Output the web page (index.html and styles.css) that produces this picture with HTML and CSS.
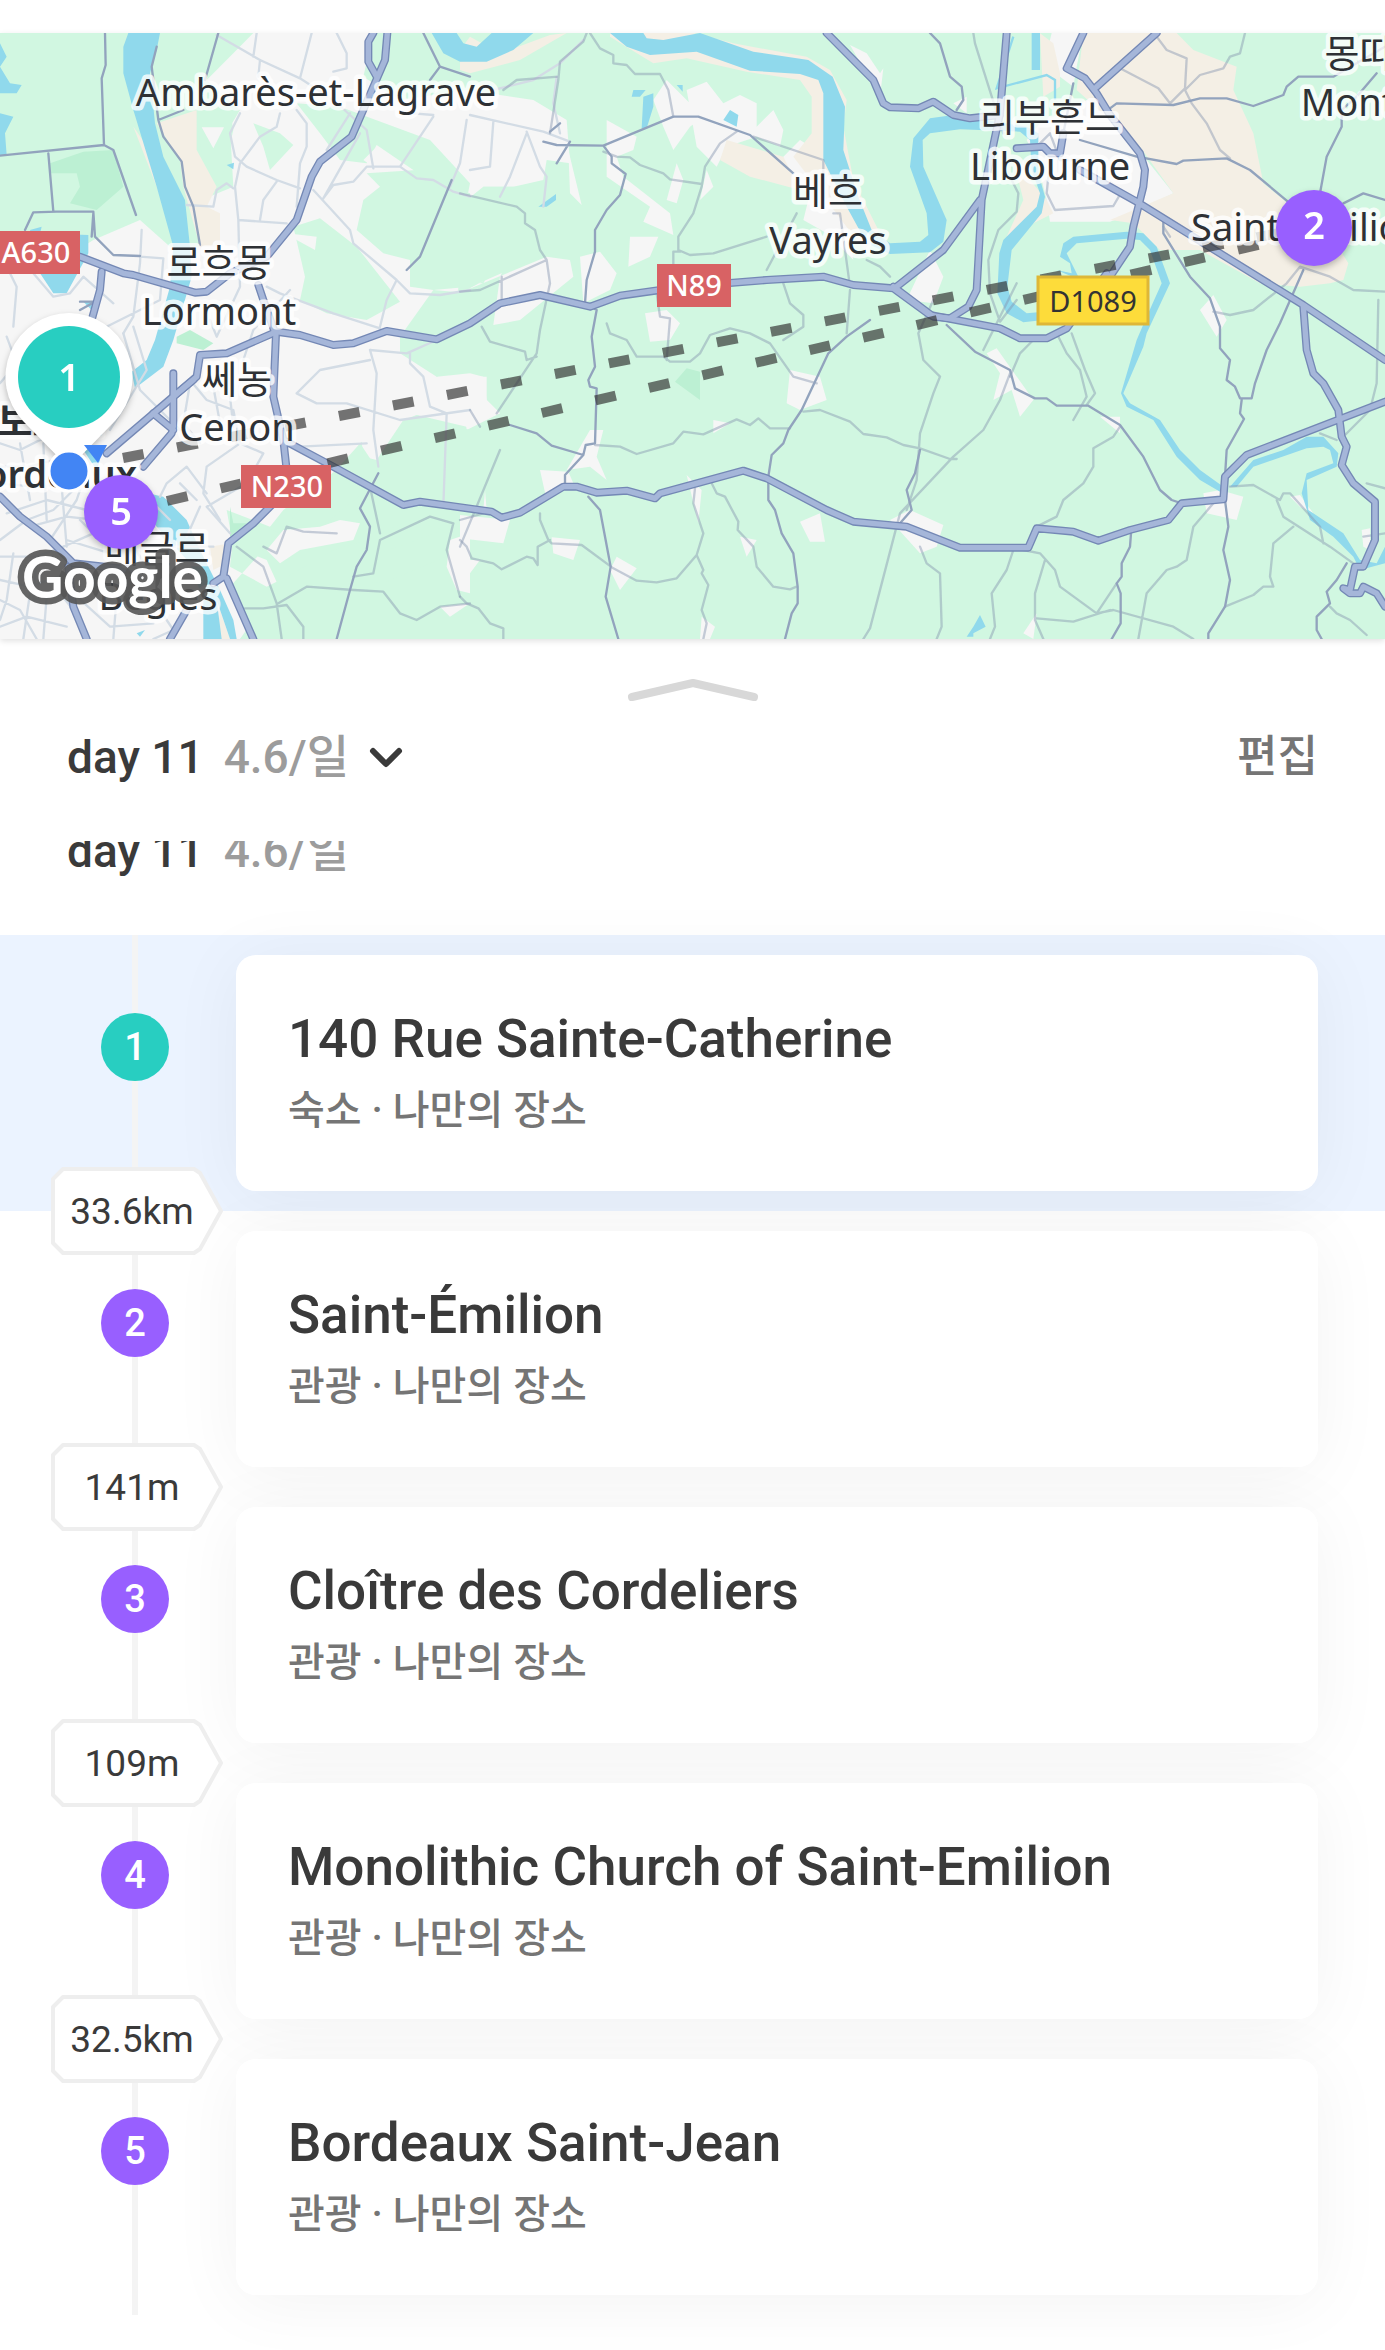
FILE: index.html
```html
<!DOCTYPE html>
<html lang="ko">
<head>
    <meta charset="UTF-8">
    <meta name="viewport" content="width=device-width, initial-scale=1.0">
    <title>day 11</title>
    <link rel="stylesheet" href="styles.css">
</head>
<body>
    <section class="map" aria-label="지도">
        <svg class="map-canvas" viewBox="0 33 1385 606">
            <!-- Terrain, drawn at three units to a pixel -->
            <svg x="0" y="33" width="1385" height="606" viewBox="0 99 4155 1818">
                <defs>
                    <g id="highways">
                        <path d="M1120 99L1105 125V185L1130 230M1162 99L1155 180L1055 410L960 485L935 530L890 660L800 770L690 820L620 875L585 878L400 825L370 820L240 770M305 815L300 870L275 960M775 855L790 900L822 990"/>
                        <path d="M0 1490L60 1550L140 1610L220 1690L400 1710M205 1700L220 1820L260 1917M510 1917L560 1830M320 1360L590 1130L600 1065L680 1060L830 995L900 1005L1000 1035L1060 1030L1160 993L1310 1018L1410 970L1500 910L1620 885L1770 920L1860 887L2050 860L2300 840L2470 830L2560 855L2680 865L2790 945L3000 985L3060 1015L3140 1015L3200 985L3320 820"/>
                        <path d="M828 1000L820 1190L850 1320L860 1410L820 1510L760 1570L685 1630L670 1730L640 1750M680 1735L760 1917M520 1120V1280L515 1300L430 1400M460 1240L520 1290M520 1190L580 1140M850 1320L1000 1400L1210 1515L1260 1505L1475 1535L1505 1553L1560 1538L1690 1460H1730L1790 1478L1880 1472L1965 1495L1980 1480L2230 1412L2300 1435L2480 1530L2560 1565L2720 1580L2880 1643H3085L3110 1585L3220 1595L3295 1622L3390 1590L3505 1560L3545 1510L3670 1498L3675 1430L3740 1365L4155 1205"/>
                        <path d="M2480 99L2620 240L2650 310L2670 322L2755 325L2800 305L2860 345L2910 355L3000 345M3020 99L3000 340L2945 600L2930 870L2905 920L2850 955L2800 950L2680 860M2940 600L2830 750L2690 860M3250 99L3200 205L3255 235L3290 280L3330 345L3420 460L3435 510L3430 560L3400 680L3390 740L3330 830M3290 260L3470 99M3050 445L3130 440L3150 460L3180 460L3190 400M3240 510L3410 605L3910 915L4155 1080M3910 920L3920 1050L3940 1120L3970 1150L4015 1230L4025 1310L4040 1340L4025 1395L4060 1450L4125 1505V1620L4090 1700H4065L4050 1770L4030 1765L4050 1780L4080 1780L4090 1760L4130 1780L4155 1820"/>
                    </g>
                </defs>

                <rect class="green" y="99" width="4155" height="1818"/>

                <!-- Built-up areas -->
                <g class="urban">
                    <path d="M0 820H120L280 720L420 660L510 740L600 740L580 610L700 560L690 380L720 330L620 240L700 160L760 99H1120L1090 230L1200 300L1400 270L1600 300L1700 360L1710 490L1640 480L1630 540L1540 560L1450 560L1430 640L1390 560L1370 960L1300 1020L1310 1130L1410 1120L1450 1130L1460 1200L1500 1240L1400 1280L1250 1245L1210 1270V1350L1120 1390L1080 1330L1050 1380L850 1530L810 1580L680 1530L700 1640L800 1680L850 1790L830 1830L760 1860L720 1917H0Z"/>
                    <path d="M1820 360L1910 410L1900 450L1850 470L1870 530L2010 640L2020 705L1930 665L1950 620L1820 530ZM1960 300L2000 240L2060 300L2110 350L2070 380L2020 450L1990 380ZM2060 270L2120 245L2170 310L2220 285L2270 310V380L2320 330L2350 390L2340 440L2270 410L2180 440L2150 500L2090 440ZM1890 710H1975L1950 770L1885 800ZM1500 830L1510 810L1400 870L1640 770L1710 780L1720 830L1560 960L1480 975ZM1740 770L1800 755L1850 820L1830 870L1750 910ZM1430 850L1510 710L1520 730L1450 850ZM1705 450L1745 615L1710 580ZM2000 600L2030 490L2050 540L2030 610ZM2120 510L2140 560L2100 600ZM2350 470L2400 420L2480 470L2500 600L2540 660L2560 780L2480 700L2410 660L2430 580L2340 530ZM2550 135L2600 160L2640 220L2650 205L2640 290Z"/>
                    <path d="M1935 940L2000 930L2040 970L2010 1020L1950 1025ZM1380 1130H1460V1200L1500 1240L1400 1290ZM2370 1110L2460 1130L2480 1200L2400 1230L2360 1210ZM1770 1290H1810L1790 1370L1820 1440L1770 1400L1700 1410ZM1620 1410L1705 1415L1720 1450L1640 1500ZM1380 1545L1530 1560L1510 1630L1380 1615ZM1450 1530L1455 1470L1460 1530ZM2400 1565L2460 1540L2475 1625H2430ZM1655 1612L1740 1620L1720 1680L1660 1660ZM1850 1670L1910 1705L1860 1770L1830 1710ZM2060 1425L2105 1470L2095 1570ZM2220 1610L2270 1620L2240 1670ZM2105 1850L2145 1880L2130 1917H2100ZM2670 1560L2730 1530L2830 1575L2810 1640L2760 1660ZM1390 1680H1440L1410 1720ZM2140 1260L2190 1270L2140 1300Z"/>
                    <path d="M3155 99H3250L3230 200L3220 260L3180 230L3145 140ZM3080 420L3120 370L3260 300L3290 310L3400 430L3520 580L3400 640L3330 665H3150L3140 600L3110 480ZM2790 750L2830 830L2800 910L2720 900ZM3600 930L3640 885L3680 960L3650 1010ZM2960 1060L2990 1045L3100 1200L3060 1250L3035 1170L2980 1200L3000 1120ZM3300 1250L3360 1250V1300ZM3610 1480L3660 1470L3730 1490L3710 1560L3620 1540ZM3870 1490L3900 1485L3940 1540L3900 1520ZM4085 1590L4110 1585V1650L4090 1640ZM3070 1900L3110 1840L3100 1917ZM2860 310L2900 290L2900 340Z"/>
                </g>
                <g class="green">
                    <path d="M890 310L1020 320L1290 420L1410 550L1400 600L1340 570L1240 510L1130 435L1100 490L1020 480L960 400ZM1100 520L1250 510L1350 560L1410 580V860L1300 870L1230 860V780L1150 760L1070 690L1090 600L1140 560ZM880 680L960 655L1070 740L1200 905L1100 960L980 940L900 900L915 830ZM760 370L840 400L880 435L810 510L790 440ZM590 340L690 330L700 390L660 560L610 500ZM1200 1010L1300 870L1410 880V1080L1310 1130L1200 1060ZM1400 600L1450 560L1600 560L1640 760L1390 870Z"/>
                    <path d="M1085 1325L1090 1370L1130 1380L1210 1260L1250 1245L1410 1290V1510L1210 1500L1090 1480L950 1590L840 1600L760 1560L700 1600L690 1700L800 1760L880 1720L1000 1650L1100 1620L1230 1560L1330 1590L1140 1660L1110 1770L1060 1800L1080 1917H720L780 1860L740 1820L730 1780L860 1830L920 1900L940 1820L1060 1740L1150 1750L1410 1640V1917H760L690 1760Z"/>
                </g>
                <path class="urban" d="M605 382H672L640 445ZM850 1590L960 1580L1020 1560L1080 1570L1060 1620L900 1650L840 1690L800 1650ZM1350 1620L1410 1600V1780L1370 1770L1340 1700ZM1320 1820L1410 1810L1350 1850ZM860 700L950 710L945 750L890 720ZM1090 480L1130 440L1185 490L1140 515Z"/>
                <path class="sand" d="M470 370L590 330V450L650 560L620 620L660 640V740H600L550 560L540 480ZM1380 150L1410 110L1500 160L1650 105L1700 99L1560 180L1410 220L1380 210ZM1830 110L1960 190L2060 175L2240 215L2400 240L2435 290V400L2380 470L2600 760L2635 690L2560 540L2530 380L2540 300L2490 210L2420 170L2200 130L2080 99H1830ZM2180 420L2350 470L2400 570L2250 530L2160 480ZM400 380L470 480L560 720L570 740L530 740L470 560ZM630 1640L690 1630L680 1690L640 1710ZM660 1830L690 1917H650Z"/>
                <path class="sand" d="M3250 99H3530L3580 150L3710 200L3700 270L3760 400L3790 550L3900 640L3990 700L4045 790L4030 840L3990 850L3900 860L3780 850L3600 750H3480L3400 670L3330 660L3520 580L3420 440L3230 270ZM3120 100L3160 130L3180 220L3180 260L3130 290ZM3040 480L3140 600L3160 640L3020 710L3070 600Z"/>
                <path class="park" d="M150 490L250 455L340 450L370 560L290 630L210 610L240 560L230 520L150 520ZM2025 1145L2060 1105L2100 1115L2100 1200ZM530 1010L570 990L640 1030L610 1050L530 1030ZM690 1520L700 1570L740 1570L690 1610Z"/>

                <!-- Rivers and lakes -->
                <g class="water">
                    <path d="M385 99H480L470 150L450 220L465 370L490 470L555 600L570 740L575 830L520 1020L490 1100L405 1165L395 1115L440 1080L465 1020L510 860L520 740L470 560L400 330L370 220V140ZM0 130L20 170L0 200L30 250L65 255L50 280H0ZM0 340L40 350L15 400L20 465H0ZM90 690L125 680L120 700L265 705V760L200 880H160L120 820ZM680 495L702 488L700 508ZM250 905H280L275 930Z"/>
                    <path d="M400 1470L490 1490L560 1560L600 1650L660 1770L700 1860L710 1917H690L650 1800L665 1917H610V1800L570 1690L470 1580ZM260 1330L300 1380L290 1410L250 1350ZM410 1900L435 1890L420 1910Z"/>
                    <path d="M1295 99L1330 160L1380 185H1460L1540 150L1600 99H1475L1430 140L1390 130L1370 99Z"/>
                    <path d="M1830 99L1880 140L1950 165L2090 155L2250 212L2400 222L2455 240L2470 280V480L2540 620L2600 730L2670 762L2790 757L2830 725L2840 660L2770 500L2768 420L2790 400L2880 388L3060 395L3090 420L3095 510L3120 580L3110 620L3010 720L2998 760L2992 880L3020 940L3070 967L3130 960V935L3080 940L3035 905L3022 860L3035 750L3125 640L3135 590L3115 520V400L3080 380L2860 345L2790 355L2740 415L2730 500L2780 640L2785 705L2760 725L2670 730L2615 690L2575 590L2530 450L2535 320L2498 230L2425 180L2260 155L2100 99L1990 120L1940 115L1930 99Z"/>
                    <path d="M1900 270H1937L1920 290L1895 290ZM1930 290L1960 280V320L1940 385H1925ZM2030 255H2048V275ZM2170 360L2190 330L2215 345L2210 380ZM1615 620L1668 582V600L1640 620ZM3095 99H3120V210H3095Z"/>
                    <path d="M3170 810L3215 820L3210 790L3180 770L3190 730L3220 710L3380 695L3430 700L3470 740L3510 850L3440 1000L3430 1040L3370 1180L3390 1210L3480 1260L3540 1350L3600 1410L3670 1460L3660 1475L3600 1440L3530 1370L3460 1260L3380 1220L3363 1180L3410 1020L3440 950L3485 850L3450 750L3420 720L3380 716L3230 730L3200 760L3225 810L3240 840ZM3690 1460L3760 1380L3850 1350L3920 1310L3970 1310L4015 1360L4010 1400L3920 1440L3925 1530L4030 1600L4080 1680L4130 1690L4155 1640V1690L4080 1710L4060 1670L4000 1610L3930 1560L3905 1480L3920 1420L4000 1390L3990 1350L3970 1340L3920 1345L3760 1400L3710 1460ZM2900 1910L2920 1880L2940 1845L2957 1880L2920 1900V1910Z"/>
                    <path class="stream" d="M3040 110L2990 265L3140 225L3165 240V300"/>
                </g>

                <!-- Streets -->
                <path class="street" d="M650 105L780 180L900 235L1000 300L1100 390L1120 505M770 99L760 170M780 180L775 230M935 99L900 235M1010 99L1040 160V205L1000 215M840 340L830 380L780 410L720 490L705 560L715 660L860 670M720 340L690 400L705 470L740 500L830 540L900 565M890 330L920 370V440L900 490L890 620M830 545L790 600L780 660M560 615L640 620L650 570L680 550L700 565M1300 350L1200 500H1100L1060 545L1000 555L970 595M1200 500L1250 535L1300 540L1360 575L1410 590M940 570L1050 690L1060 730L1190 840L1230 880L1320 885L1410 870M800 860L840 880L1000 940L1140 985M1400 360L1380 490L1350 560M1190 840L1160 900L1140 980M715 660L720 860L650 1010L630 960M420 770L490 775L480 900L300 990M425 690L420 790L400 950L370 1000M100 820L160 890L210 880L250 830L340 910M30 820L50 860L40 980M1050 340L980 450M1080 400L970 595M1410 345L1630 395L1710 425M1300 345L1240 340M1580 395L1620 500L1640 530L1630 620M1580 400L1530 530L1500 590M1480 365L1470 500L1410 510M1680 400L1660 310L1670 230M1480 270L1600 240L1680 190L1750 120"/>
                <path class="street" d="M1110 1050L1130 1120L1120 1290L1135 1400M1230 1060V1090L1270 1130L1290 1220L1340 1240L1330 1520M1110 1080L960 1110L890 1180M890 1180L950 1210L1040 1210L1200 1260L1410 1230M1110 1050L1220 1060L1310 1020M730 1080L760 990L870 870M570 1140L620 1200L700 1230L720 1330L790 1360L740 1450L620 1520L690 1600M620 1480L560 1400L500 1450L480 1490M720 1330L620 1400L610 1480L660 1560M570 1150L550 1270L600 1330M640 1160L660 1270M690 1190L700 1280M900 1340L1100 1330M20 1010L50 1090L0 1150M370 1000L420 1170L540 1290M400 980L440 1110L330 1290M0 1330L60 1350L140 1310L240 1360L300 1450M0 1400L90 1400L160 1380M60 1330L90 1500M130 1330L140 1560M180 1400L200 1640M0 1450L100 1460L230 1450M20 1540L140 1500L260 1530M0 1620L80 1560L160 1530L250 1440M90 1580L200 1550L290 1560M150 1620L230 1500L250 1440M0 1670H110L190 1640L280 1600M40 1660L20 1800L0 1860M110 1670L100 1800L180 1780L220 1830M0 1740L90 1760L200 1720M0 1800L60 1830L110 1917M90 1780L70 1917M200 1620L330 1660L440 1620M240 1560L320 1640M280 1510L310 1610M240 1700L350 1790L340 1917M220 1780L330 1880L460 1870M400 1640L440 1700L380 1800M440 1560L520 1640L640 1640M480 1830L520 1890L460 1917M600 1520L560 1610M430 1480L510 1560M0 1880L80 1850L200 1880M140 1790L130 1917M80 1300L30 1250L0 1230M350 1400L420 1560M540 1450L590 1500"/>

                <!-- Local roads -->
                <path class="local" d="M1500 1350L1380 1640M1760 99L1750 125L1680 185L1675 240L1650 400M1510 270L1550 240L1675 230M1770 99L1800 145L1840 165V190L1880 195L1905 222H1980L2005 270L2020 350M1810 455L1850 470L1890 472L1920 495L1990 520L2010 538L2105 552M2210 395L2160 430L2115 500L2105 560L2080 640L2035 710V750L2070 765L2140 760L2300 710M2260 410L2470 480V600M1380 580L1550 620L1575 640V670L1605 690L1620 750L1640 780L1650 850L1620 990L1610 1060L1490 1240M1380 875L1440 870L1640 780M1505 830V900M1440 1280L1410 1230M1445 980L1470 1025L1575 1055L1580 1080L1610 1070M1820 970L1830 1000L1880 1020L1910 1070H1990L2010 1085H2070L2100 1060L2130 1005L2190 985L2250 1000L2310 1030L2380 1130L2450 1150M1970 880L1980 950L2010 955L2000 1080M2020 820V755H2040M2350 850L2370 910L2410 945V980L2350 1020M2550 870L2540 1000M2300 810L2390 640M2500 640L2520 640L2550 860M2600 780L2640 800L2670 830"/>
                <path class="local" d="M1785 1335L1860 1340L1910 1362L2020 1330L2050 1295L2110 1303L2210 1258L2250 1275L2275 1255L2310 1285H2370M2410 1235L2460 1230L2550 1265L2590 1302L2660 1312L2710 1335L2760 1345L2850 1377H2870M1620 1540V1560L1645 1620L1655 1630L1745 1635L1840 1705L1910 1742L1970 1747L2030 1735L2090 1665L2110 1600L2080 1510L2085 1465M2090 1665L2110 1710L2105 1720L2125 1755L2105 1830L2120 1870L2110 1917M2135 1450L2150 1480L2175 1490L2215 1565L2213 1590L2260 1640L2270 1700L2320 1760L2370 1768L2390 1760M1380 1620L1400 1640L1415 1675L1480 1690L1505 1708L1580 1670L1600 1675L1613 1695V1640L1650 1620M1380 1560L1450 1540M1380 1790L1400 1810L1435 1825L1470 1870L1510 1885V1917M2700 1540L2860 1370L2950 1290L3000 1200L3030 1120M2700 1540L2610 1885L2590 1917M2720 1530L2750 1440L2760 1300L2800 1180L2820 1130L2770 1080L2755 1000L2800 900M2920 99L2925 130L3010 400M3035 540L3055 580L3050 635L2995 690L2965 780L2970 880L3000 965L3050 900M3050 850L2950 1050"/>
                <path class="local" d="M3150 480L3140 580L3165 630L3340 618L3365 575M3120 430L3150 400L3180 480H3270M3470 110L3500 150L3560 175L3555 265L3510 310L3475 265L3360 205M3735 99L3720 160L3690 170L3670 205L3600 225L3555 270L3575 310L3620 370L3660 450L3690 475M3490 680L3510 710M3640 935L3690 945L3760 930L3860 850L3900 800L3990 830L4060 870L4155 875M3170 1000L3200 1060L3240 1110L3260 1190L3220 1260M3215 1000L3255 1110L3285 1180L3260 1215M3100 1020L3060 1060L3030 1130M3360 1280L3340 1310L3280 1345V1400L3250 1450L3190 1500L3170 1550L3110 1580M3640 1510L3580 1580L3560 1680L3530 1700L3500 1710L3440 1780L3415 1917M3690 1460L3760 1455L3840 1500L3850 1480H3870L3960 1580L3970 1630M3830 1500L3850 1550L3990 1640L4060 1690M3880 1580L3820 1630L3810 1730L3820 1760H3790L3760 1785L3675 1820M3960 1300L4010 1320M4020 1320L4110 1230L4130 1150L4135 900M4100 1450L4155 1465M4090 1610L4155 1600M3040 1650L3020 1710L2975 1780L2985 1880L2970 1917M3070 1650L3120 1660L3165 1710L3180 1760L3290 1840L3340 1830L3520 1880L3580 1917M3135 1680L3105 1780V1860L3130 1917M3110 1855L3220 1865L3330 1830M3290 1840L3350 1750M2760 1640L2780 1690L2820 1720L2825 1880L2810 1917M3990 1820L4010 1840L4050 1860L4100 1905M710 1640L790 1700L830 1810L845 1917M835 1810L920 1760L1060 1770L1150 1775L1200 1840L1250 1860L1320 1820L1410 1810M735 1825H790L860 1815L910 1880V1917M1010 1600L910 1595L860 1580L830 1660L790 1640M1060 1730L1120 1720L1140 1620L1290 1550L1360 1570M1360 1570L1340 1650L1380 1790M1110 1460L1140 1600"/>

                <!-- Secondary roads -->
                <path class="secondary" d="M315 99L317 195L305 235L312 435L0 467M312 435L340 450L408 645M145 460L160 635L280 635L285 710L340 765L420 768M75 690L100 637L170 635M280 640L275 710M240 905H285L240 930M655 99L615 240M470 140L455 200L475 360L550 330M475 360L490 410L545 485L555 560L580 620L600 735M1270 99L1320 200L1290 240M1320 200L1410 230M1650 395L1680 370M1710 425L1670 490M1355 540L1260 770L1220 810M1630 425L1670 435L1810 437L2020 350H2095L2250 405L2380 520M1810 437L1835 470V490L1877 522L1860 585L1820 630L1785 690V755L1760 840L1755 910L1790 930L1775 1010L1785 1100L1765 1140L1770 1160L1790 1165L1785 1330L1757 1335L1750 1365L1695 1425V1455M1530 1275L1610 1300L1655 1337L1750 1365M1765 1490L1800 1530L1832 1700L1817 1790L1855 1917M2610 960L2540 1010L2485 1060L2405 1230L2365 1290L2350 1330L2315 1365L2305 1430V1500L2325 1530L2345 1600L2380 1660L2393 1760V1810L2375 1840L2355 1917M2760 1350L2745 1420L2720 1470L2735 1530L2700 1570"/>
                <path class="secondary" d="M2790 99L2820 130L2850 230L2885 260L2890 300L2870 330M2840 975L2925 1055L3030 1110L3045 1165L3105 1195H3140L3170 1217H3265L3360 1275L3430 1370L3480 1470L3515 1500L3545 1510M3330 325L3350 310L3520 315L3600 295H3680L3760 318L3850 285L3860 260L3895 230H4000L4155 140M4130 220L4070 290L4025 330V380L3980 470L3960 580M3240 420L3410 470L3530 492L3550 482L3680 475L3750 510L3870 610M4030 610L4090 580L4155 600M3490 660V700L3570 830L3630 895L3660 980V1045L3690 1080L3680 1140L3705 1160L3720 1195H3755L3765 1150L3800 1050L3840 970L3910 810M3725 1200L3720 1240L3732 1257L3680 1350L3675 1430M3675 1500L3685 1580L3670 1650L3690 1740L3675 1820L3625 1900V1917M3393 1600L3390 1640L3365 1690V1730L3350 1750L3362 1780V1870L3335 1917M4040 1690L4010 1740L3980 1775L3990 1810L3950 1850V1890L3965 1917M1135 1420L1080 1525L1110 1580L1100 1650L1070 1700L1050 1770L1010 1917M3220 250L3190 400"/>

                <use class="highway-casing" href="#highways"/>
                <use class="highway" href="#highways"/>
            </svg>

            <!-- Routes between stops -->
            <path class="route" d="M123 458L1300 229"/>
            <path class="route" d="M167 501L1300 235"/>

            <g class="place">
                <text x="316" y="106">Ambarès-et-Lagrave</text>
                <text x="219" y="276">로흐몽</text>
                <text x="219" y="325">Lormont</text>
                <text x="237" y="393">쎄농</text>
                <text x="237" y="441">Cenon</text>
                <text x="157" y="562">베글르</text>
                <text x="158" y="610">Bègles</text>
                <text x="828" y="205">베흐</text>
                <text x="828" y="254">Vayres</text>
                <text x="1050" y="131">리부흔느</text>
                <text x="1050" y="180">Libourne</text>
                <text x="1377" y="67">몽따뉴</text>
                <text x="1393" y="116">Montagne</text>
                <text x="1308" y="241">Saint-Émilion</text>
                <text class="place-city" x="50" y="435">보르도</text>
                <text class="place-city" x="48" y="488">Bordeaux</text>
            </g>

            <g class="shield">
                <rect x="-10" y="231" width="90" height="43"/>
                <text x="36" y="263">A630</text>
                <rect x="657" y="264" width="74" height="43"/>
                <text x="694" y="296">N89</text>
                <rect x="241" y="465" width="90" height="43"/>
                <text x="287" y="497">N230</text>
            </g>
            <g class="shield shield-local">
                <rect x="1038" y="277" width="110" height="47"/>
                <text x="1093" y="312">D1089</text>
            </g>

            <text class="map-logo" x="22" y="598">Google</text>

            <g class="pin">
                <circle class="visit" cx="1314" cy="228" r="38"/>
                <text x="1314" y="239">2</text>
            </g>
            <g class="pin">
                <path class="pin-drop" d="M69 313a64 64 0 0 1 46 108L69 468L23 421A64 64 0 0 1 69 313Z"/>
                <circle class="stay" cx="69" cy="377" r="51"/>
                <text x="69" y="391">1</text>
            </g>
            <path class="location" d="M84 445H107L98 463Z"/>
            <circle class="location location-dot" cx="69" cy="471" r="20"/>
            <g class="pin">
                <circle class="visit" cx="121" cy="512" r="37"/>
                <text x="121" y="525">5</text>
            </g>
        </svg>
    </section>

    <main class="sheet">
        <button class="handle" type="button" aria-label="펼치기">
            <svg width="132" height="26" viewBox="0 0 132 26"><path d="M5 19L66 5L127 19"/></svg>
        </button>

        <header class="day-bar">
            <button class="day" type="button">
                day 11 <span class="pace">4.6/일</span>
                <svg class="chevron" width="34" height="22" viewBox="0 0 34 22"><path d="M4 5L17 18L30 5"/></svg>
            </button>
            <button class="edit" type="button">편집</button>
        </header>

        <div class="schedule">
            <h2 class="day day-title">day 11 <span class="pace">4.6/일</span></h2>

            <ol class="stops">
                <li class="stop current">
                    <div class="rail">
                        <span class="number stay">1</span>
                        <span class="distance"><svg viewBox="0 0 172 88"><path d="M12 2H143L149 6L170 44L149 82L143 86H12L2 76V12Z"/></svg><b>33.6km</b></span>
                    </div>
                    <article class="card">
                        <div class="card-body">
                            <h3>140 Rue Sainte-Catherine</h3>
                            <p>숙소 · 나만의 장소</p>
                        </div>
                    </article>
                </li>
                <li class="stop">
                    <div class="rail">
                        <span class="number visit">2</span>
                        <span class="distance"><svg viewBox="0 0 172 88"><path d="M12 2H143L149 6L170 44L149 82L143 86H12L2 76V12Z"/></svg><b>141m</b></span>
                    </div>
                    <article class="card">
                        <div class="card-body">
                            <h3>Saint-Émilion</h3>
                            <p>관광 · 나만의 장소</p>
                        </div>
                    </article>
                </li>
                <li class="stop">
                    <div class="rail">
                        <span class="number visit">3</span>
                        <span class="distance"><svg viewBox="0 0 172 88"><path d="M12 2H143L149 6L170 44L149 82L143 86H12L2 76V12Z"/></svg><b>109m</b></span>
                    </div>
                    <article class="card">
                        <div class="card-body">
                            <h3>Cloître des Cordeliers</h3>
                            <p>관광 · 나만의 장소</p>
                        </div>
                    </article>
                </li>
                <li class="stop">
                    <div class="rail">
                        <span class="number visit">4</span>
                        <span class="distance"><svg viewBox="0 0 172 88"><path d="M12 2H143L149 6L170 44L149 82L143 86H12L2 76V12Z"/></svg><b>32.5km</b></span>
                    </div>
                    <article class="card">
                        <div class="card-body">
                            <h3>Monolithic Church of Saint-Emilion</h3>
                            <p>관광 · 나만의 장소</p>
                        </div>
                    </article>
                </li>
                <li class="stop">
                    <div class="rail">
                        <span class="number visit">5</span>
                    </div>
                    <article class="card">
                        <div class="card-body">
                            <h3>Bordeaux Saint-Jean</h3>
                            <p>관광 · 나만의 장소</p>
                        </div>
                    </article>
                </li>
            </ol>
        </div>
    </main>
</body>
</html>
```
FILE: styles.css
```css
* {
    box-sizing: border-box;
}

body {
    margin: 0;
    padding-top: 33px;
    background-color: #fff;
    color: #3a3a3a;
    font-family: Roboto, "Noto Sans CJK KR", sans-serif;
    font-weight: 500;
}

button {
    padding: 0;
    border: none;
    background: none;
    color: inherit;
    font: inherit;
    cursor: pointer;
}

h2, h3, p, ol {
    margin: 0;
    padding: 0;
    font-weight: 500;
}

/* Map */
.map {
    box-shadow: 0 2px 6px rgba(0, 0, 0, 0.12);
    font-family: "Noto Sans", "Noto Sans CJK KR", sans-serif;
}

.map-canvas {
    display: block;
    width: 100%;
}

.green { fill: #d1f7e1; }
.urban { fill: #f6f6f6; }
.sand { fill: #f4efe5; }
.park { fill: #bcf0d3; }
.water { fill: #90d9ec; }

.stream {
    fill: none;
    stroke: #90d9ec;
    stroke-width: 7;
}

.street, .local, .secondary, .highway, .highway-casing {
    fill: none;
    stroke-linejoin: round;
    stroke-linecap: round;
}

.street {
    stroke: #d3dce5;
    stroke-width: 7;
}

.local {
    stroke: #8494b0;
    stroke-opacity: 0.45;
    stroke-width: 7;
}

.secondary {
    stroke: #92a3bd;
    stroke-width: 7;
}

.highway-casing {
    stroke: #7488b5;
    stroke-width: 24;
}

.highway {
    stroke: #a5b6d9;
    stroke-width: 16;
}

.route {
    fill: none;
    stroke: #333;
    stroke-opacity: 0.68;
    stroke-width: 10;
    stroke-dasharray: 21 34;
}

.place text {
    fill: #2e3135;
    stroke: #fff;
    stroke-opacity: 0.8;
    stroke-width: 9;
    stroke-linejoin: round;
    paint-order: stroke;
    font-size: 38px;
    font-weight: 400;
    text-anchor: middle;
}

.place .place-city {
    font-weight: 600;
}

.shield rect {
    fill: #d86264;
}

.shield text {
    fill: #fff;
    font-size: 29px;
    text-anchor: middle;
}

.shield-local rect {
    fill: #fddc3a;
    stroke: #deb737;
    stroke-width: 3;
}

.shield-local text {
    fill: #333;
    font-weight: 400;
}

.map-logo {
    fill: #fff;
    stroke: #555;
    stroke-opacity: 0.9;
    stroke-width: 13;
    stroke-linejoin: round;
    paint-order: stroke;
    font-family: Lato, sans-serif;
    font-size: 57px;
    font-weight: 700;
}

.pin {
    filter: drop-shadow(0 3px 3px rgba(0, 0, 0, 0.25));
}

.pin text {
    fill: #fff;
    font-size: 38px;
    font-weight: 600;
    text-anchor: middle;
}

.pin-drop {
    fill: #fff;
}

.stay {
    fill: #28cec1;
    background-color: #28cec1;
}

.visit {
    fill: #985fff;
    background-color: #985fff;
}

.location {
    fill: #4285f4;
}

.location-dot {
    stroke: #fff;
    stroke-width: 3;
}

/* Bottom sheet */
.sheet {
    padding-top: 36px;
}

.handle {
    display: block;
    margin: 0 auto;
    height: 32px;
}

.handle svg, .chevron {
    fill: none;
    stroke-linecap: round;
    stroke-linejoin: round;
}

.handle svg {
    display: block;
    stroke: #d8d8d8;
    stroke-width: 8;
}

.day-bar {
    display: flex;
    justify-content: space-between;
    align-items: flex-start;
    height: 134px;
    padding: 20px 67px 0;
}

.day {
    display: flex;
    align-items: center;
    gap: 20px;
    font-size: 46px;
    line-height: 60px;
}

.pace {
    color: #9c9c9c;
}

.chevron {
    stroke: #3a3a3a;
    stroke-width: 6;
}

.edit {
    color: #757575;
    font-size: 44px;
    line-height: 60px;
}

.schedule {
    overflow: hidden;
}

.day-title {
    height: 114px;
    margin-top: -20px;
    padding: 0 67px;
    align-items: flex-start;
}

.stops {
    list-style: none;
    padding-bottom: 35px;
}

.stop {
    display: grid;
    grid-template-columns: 236px 1fr;
    padding-right: 67px;
}

.current {
    background-color: #ebf3ff;
}

.rail {
    position: relative;
    padding: 78px 0 0 101px;
    background: linear-gradient(#f4f4f4, #f4f4f4) 132px 0 / 6px 100% no-repeat;
}

.number {
    display: grid;
    place-items: center;
    width: 68px;
    height: 68px;
    border-radius: 50%;
    color: #fff;
    font-size: 38px;
    line-height: 68px;
}

/* Distance tag sits on the border between two stops */
.distance {
    position: absolute;
    z-index: 2;
    left: 51px;
    bottom: -44px;
    width: 172px;
    height: 88px;
    padding-right: 10px;
    display: grid;
    place-items: center;
}

.distance svg {
    position: absolute;
    inset: 0;
    fill: #fff;
    stroke: #eee;
    stroke-width: 4;
    stroke-linejoin: round;
}

.distance b {
    position: relative;
    font-size: 37px;
    font-weight: 400;
}

.card {
    margin: 20px 0;
    border-radius: 20px;
    box-shadow: 0 6px 72px rgba(0, 0, 0, 0.05);
}

.card-body {
    position: relative;
    z-index: 1;
    padding: 47px 52px 45px;
    border-radius: 20px;
    background-color: #fff;
}

.card h3 {
    font-size: 53px;
    line-height: 74px;
}

.card p {
    color: #757575;
    font-size: 40px;
    line-height: 70px;
}
```
